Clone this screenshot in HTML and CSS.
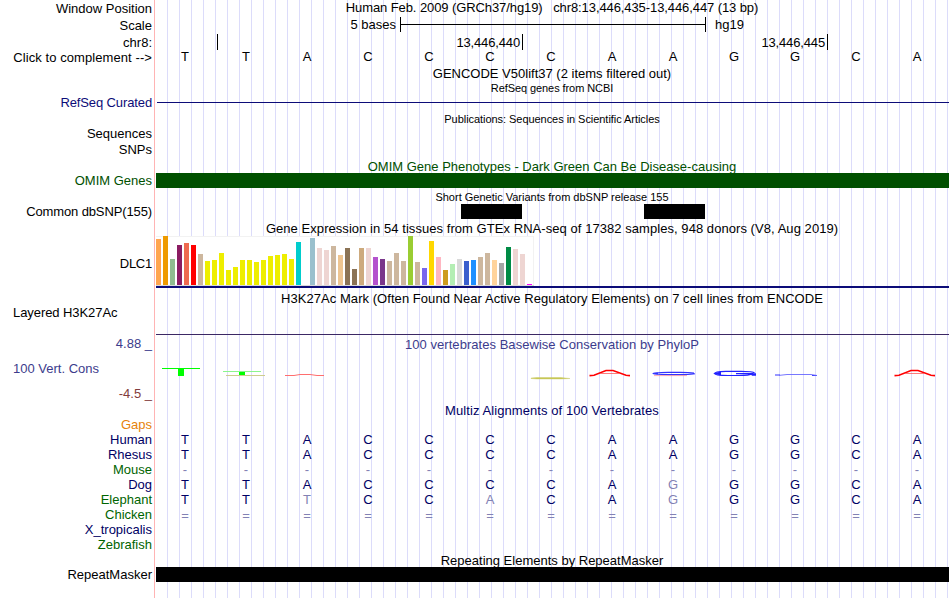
FILE: index.html
```html
<!DOCTYPE html>
<html lang="en">
<head>
<meta charset="utf-8">
<title>chr8:13,446,435-13,446,447</title>
<link rel="stylesheet" href="styles.css">
</head>
<body>
<main class="browser">
  <section class="row position"><div class="label">Window Position</div><div class="plot"><h2 class="title">Human Feb. 2009 (GRCh37/hg19) &nbsp; chr8:13,446,435-13,446,447 (13 bp)</h2></div></section>
  <section class="row scale"><div class="label">Scale</div><div class="plot"><span class="scale-size">5 bases</span><span class="scale-bar"></span><span class="assembly">hg19</span></div></section>
  <section class="row ruler"><div class="label">chr8:</div><div class="plot"><span class="tick tick-first"></span><span class="tick">13,446,440</span><span class="tick">13,446,445</span></div></section>
  <section class="row bases"><div class="label">Click to complement --&gt;</div><div class="plot letters"><i>T</i><i>T</i><i>A</i><i>C</i><i>C</i><i>C</i><i>C</i><i>A</i><i>A</i><i>G</i><i>G</i><i>C</i><i>A</i></div></section>
  <section class="row gencode"><div class="label"></div><div class="plot"><h2 class="title">GENCODE V50lift37 (2 items filtered out)</h2></div></section>
  <section class="row refseq"><div class="label">RefSeq Curated</div><div class="plot"><h2 class="title small">RefSeq genes from NCBI</h2><div class="intron"></div></div></section>
  <section class="row pubs"><div class="label"></div><div class="plot"><h2 class="title small">Publications: Sequences in Scientific Articles</h2></div></section>
  <section class="row sub"><div class="label">Sequences</div></section>
  <section class="row sub"><div class="label">SNPs</div></section>
  <section class="row omim"><div class="label">OMIM Genes</div><div class="plot"><h2 class="title">OMIM Gene Phenotypes - Dark Green Can Be Disease-causing</h2><div class="bar"></div></div></section>
  <section class="row dbsnp"><div class="label">Common dbSNP(155)</div><div class="plot"><h2 class="title small">Short Genetic Variants from dbSNP release 155</h2><div class="variants"><b></b><b></b></div></div></section>
  <section class="row gtex"><div class="label">DLC1</div><div class="plot"><h2 class="title">Gene Expression in 54 tissues from GTEx RNA-seq of 17382 samples, 948 donors (V8, Aug 2019)</h2>
    <svg class="expression" width="378" height="50" shape-rendering="crispEdges">
      <rect width="378" height="50" fill="#fff"/>
      <path d="M0 .5H377.5V49" fill="none" stroke="#f2f2f2"/>
      <path d="M0 49.5H378" stroke="#d9d9d9"/>
      <g transform="matrix(1 0 0 -1 0 49)">
        <rect x="0" width="5" height="46" fill="#ffa54f"/><rect x="7" width="5" height="49" fill="#ee9a00"/><rect x="14" width="5" height="26" fill="#8fbc8f"/><rect x="21" width="5" height="40" fill="#8b1c62"/><rect x="28" width="5" height="42" fill="#ee6a50"/><rect x="35" width="5" height="40" fill="#f00"/><rect x="42" width="5" height="31" fill="#cdb79e"/>
        <g fill="#ee0"><rect x="49" width="5" height="24"/><rect x="56" width="5" height="25"/><rect x="63" width="5" height="32"/><rect x="70" width="5" height="15"/><rect x="77" width="5" height="18"/><rect x="84" width="5" height="25"/><rect x="91" width="5" height="25"/><rect x="98" width="5" height="23"/><rect x="105" width="5" height="25"/><rect x="112" width="5" height="29"/><rect x="119" width="5" height="30"/><rect x="126" width="5" height="31"/><rect x="133" width="5" height="26"/></g>
        <rect x="140" width="5" height="43" fill="#00cdcd"/><rect x="154" width="5" height="47" fill="#9ac0cd"/><rect x="161" width="5" height="37" fill="#eed5d2"/><rect x="168" width="5" height="35" fill="#eed5d2"/><rect x="175" width="5" height="39" fill="#cdb79e"/><rect x="182" width="5" height="30" fill="#eec591"/><rect x="189" width="5" height="37" fill="#8b7355"/><rect x="196" width="5" height="16" fill="#8b7355"/><rect x="203" width="5" height="37" fill="#cdaa7d"/><rect x="210" width="5" height="37" fill="#eed5d2"/><rect x="217" width="5" height="28" fill="#b452cd"/><rect x="224" width="5" height="26" fill="#7a378b"/>
        <rect x="231" width="5" height="24" fill="#cdb79e"/><rect x="238" width="5" height="32" fill="#cdb79e"/><rect x="245" width="5" height="24" fill="#cdb79e"/><rect x="252" width="5" height="49" fill="#9acd32"/><rect x="259" width="5" height="23" fill="#cdb79e"/><rect x="266" width="5" height="17" fill="#7a67ee"/><rect x="273" width="5" height="44" fill="#ffd700"/><rect x="280" width="5" height="28" fill="#ffb6c1"/><rect x="287" width="5" height="15" fill="#cd9b1d"/><rect x="294" width="5" height="21" fill="#b4eeb4"/><rect x="301" width="5" height="26" fill="#d9d9d9"/><rect x="308" width="5" height="24" fill="#3a5fcd"/><rect x="315" width="5" height="25" fill="#1e90ff"/>
        <rect x="322" width="5" height="28" fill="#cdb79e"/><rect x="329" width="5" height="32" fill="#cdb79e"/><rect x="336" width="5" height="25" fill="#ffd39b"/><rect x="343" width="5" height="22" fill="#a6a6a6"/><rect x="350" width="5" height="38" fill="#008b45"/><rect x="357" width="5" height="36" fill="#eed5d2"/><rect x="364" width="5" height="31" fill="#eed5d2"/><rect x="371" width="5" height="1" fill="#f0f"/>
      </g>
    </svg><div class="gene-line"></div></div></section>
  <section class="row h3k"><div class="label left">Layered H3K27Ac</div><div class="plot"><h2 class="title">H3K27Ac Mark (Often Found Near Active Regulatory Elements) on 7 cell lines from ENCODE</h2><div class="baseline"></div></div></section>
  <section class="row cons"><div class="label"><div>4.88 _</div><div class="left">100 Vert. Cons</div><div class="low">-4.5 _</div></div><div class="plot"><h2 class="title">100 vertebrates Basewise Conservation by PhyloP</h2>
    <svg class="logo" width="793" height="30" viewBox="156 352 793 30">
      <g shape-rendering="crispEdges"><path d="M162 368h38v1h-38zM178 368h6v8h-6zM239 371h6v4h-6z" fill="#0f0"/><path d="M223 371h38v1h-38z" fill="#8cf58c"/><path d="M226 375h39v1h-39z" fill="#cdcd8c"/></g>
      <path d="M285 375.5h9l6-1h10l7 1h7" fill="none" stroke="#ff6e6e"/>
      <path d="M531 378l6-.5h24l9 1-9 .5h-24l-6-.5z" fill="#c8c850" stroke="#c8c864" stroke-width=".4"/>
      <g id="adenine"><path d="M589.5 375.6L594 375.2L606 370.5H613L626 375.2L630 375.6" fill="none" stroke="red" stroke-width="1.6"/><path d="M600 373.5h19" stroke="#ff5a5a" stroke-width=".8"/></g>
      <use href="#adenine" x="305"/>
      <path d="M694 373.1Q689 372.4 680 372.4H668Q653 372.7 653 373.6Q653 374.5 668 374.6H684Q692 374.6 695 373.8" fill="none" stroke="#33f" stroke-width="1.1"/><path d="M652 373.6l6-1v2z" fill="#33f"/><path d="M654 375.6h33" stroke="#f99" stroke-width=".8"/>
      <path d="M754.5 373Q753 371.4 741 371.4H726Q714.5 371.7 714.5 373.5Q714.5 375.4 728 375.5H739Q749 375.5 753 373.6H736" fill="none" stroke="#22f" stroke-width="1.2"/>
      <path d="M713 373.5l8-2v4zM750 373.2h6v2.5h-4z" fill="#22f"/>
      <path d="M775 374.5h5v1h-5zM812 375h5v1h-5z" fill="#33f"/><path d="M779 375.4l8-.9h24l6 1" fill="none" stroke="#6969ff" stroke-width=".9"/>
    </svg></div></section>
  <section class="row multiz"><div class="label"></div><div class="plot"><h2 class="title">Multiz Alignments of 100 Vertebrates</h2></div></section>
  <section class="row species"><div class="label gaps">Gaps</div></section>
  <section class="row species"><div class="label">Human</div><div class="plot letters"><i>T</i><i>T</i><i>A</i><i>C</i><i>C</i><i>C</i><i>C</i><i>A</i><i>A</i><i>G</i><i>G</i><i>C</i><i>A</i></div></section>
  <section class="row species"><div class="label">Rhesus</div><div class="plot letters"><i>T</i><i>T</i><i>A</i><i>C</i><i>C</i><i>C</i><i>C</i><i>A</i><i>A</i><i>G</i><i>G</i><i>C</i><i>A</i></div></section>
  <section class="row species"><div class="label alt">Mouse</div><div class="plot letters faint"><i>-</i><i>-</i><i>-</i><i>-</i><i>-</i><i>-</i><i>-</i><i>-</i><i>-</i><i>-</i><i>-</i><i>-</i><i>-</i></div></section>
  <section class="row species"><div class="label">Dog</div><div class="plot letters"><i>T</i><i>T</i><i>A</i><i>C</i><i>C</i><i>C</i><i>C</i><i>A</i><i class="faint">G</i><i>G</i><i>G</i><i>C</i><i>A</i></div></section>
  <section class="row species"><div class="label alt">Elephant</div><div class="plot letters"><i>T</i><i>T</i><i class="faint">T</i><i>C</i><i>C</i><i class="faint">A</i><i>C</i><i>A</i><i class="faint">G</i><i>G</i><i>G</i><i>C</i><i>A</i></div></section>
  <section class="row species"><div class="label alt">Chicken</div><div class="plot letters faint unaligned"><i>=</i><i>=</i><i>=</i><i>=</i><i>=</i><i>=</i><i>=</i><i>=</i><i>=</i><i>=</i><i>=</i><i>=</i><i>=</i></div></section>
  <section class="row species"><div class="label">X_tropicalis</div></section>
  <section class="row species"><div class="label alt">Zebrafish</div></section>
  <section class="row repeats"><div class="label">RepeatMasker</div><div class="plot"><h2 class="title">Repeating Elements by RepeatMasker</h2><div class="bar"></div></div></section>
</main>
</body>
</html>
```
FILE: styles.css
```css
* { box-sizing: border-box; }
body { margin: 0; background: #fff; }
.browser {
  width: 949px;
  height: 598px;
  overflow: hidden;
  font: 13px/15px "Liberation Sans", Arial, sans-serif;
  color: #000;
  background:
    linear-gradient(#ffb4b4, #ffb4b4) 154px 0 / 1px 100% no-repeat,
    repeating-linear-gradient(90deg, #dcdcfa 0 1px, transparent 1px 12px) 167px 0 / 782px 100% no-repeat;
}
.row {
  display: grid;
  grid-template-columns: 152px 793px;
  column-gap: 4px;
  white-space: nowrap;
}
.label { text-align: right; }
.left { text-align: left; padding-left: 13px; }
.title { margin: 0 1px 0 0; font-size: 13px; font-weight: 400; text-align: center; height: 15px; }
.small { font-size: 11px; line-height: 12px; height: 12px; }
.letters { display: grid; grid-template-columns: repeat(13, 61px); margin-left: -1.5px; text-align: center; }
.letters i { font-style: normal; }

.position { height: 17px; }
.position .title { letter-spacing: -.09px; }
.position .label, .scale .label, .ruler .label, .bases .label { padding-top: 1px; }
.scale { height: 17px; }
.scale .plot { display: flex; }
.scale-size { width: 240px; text-align: right; }
.scale-bar {
  width: 306px;
  height: 15px;
  margin-left: 4px;
  border: solid #000;
  border-width: 0 1px;
  background: linear-gradient(#000, #000) 0 7px / 100% 1px no-repeat;
}
.assembly { margin-left: 9px; }
.ruler { height: 15px; }
.ruler .plot { display: flex; }
.tick { width: 305px; padding: 1px 2px 0 0; border-right: 1px solid #000; text-align: right; letter-spacing: -.15px; }
.tick-first { width: 62px; }
.bases { height: 16px; }
.bases .label { letter-spacing: .08px; }
.gencode { height: 15px; padding-top: 1px; }
.refseq { height: 31px; }
.refseq .label { padding-top: 15px; color: #0c0c78; letter-spacing: -.12px; }
.refseq .title { letter-spacing: -.08px; }
.refseq .plot, .pubs .plot, .dbsnp .plot, .gtex .plot, .h3k .plot, .cons .plot { padding-top: 2px; }
.intron { height: 1px; margin: 8px 0 0 1px; background: #0c0c78; }
.pubs { height: 15px; letter-spacing: -.05px; }
.sub { height: 16px; }
.omim { height: 31px; color: #005000; }
.omim .label, .dbsnp .label, .repeats .label { padding-top: 15px; }
.omim .plot, .repeats .plot { padding-top: 1px; }
.omim .title, .repeats .title { height: 14px; }
.bar { position: relative; height: 15px; background: #000; }
.omim .bar { background: #005000; }
.dbsnp { height: 30px; }
.dbsnp .label { letter-spacing: -.12px; }
.variants { display: flex; gap: 122px; margin: 1px 0 0 305px; }
.variants b { width: 61px; height: 15px; background: #000; }
.gtex { height: 70px; }
.gtex .label { padding-top: 37px; letter-spacing: -.25px; }
.gtex .title { letter-spacing: .055px; }
.expression, .logo { display: block; }
.gene-line { height: 2px; background: #0c0c78; }
.h3k { height: 46px; }
.h3k .label { padding-top: 16px; letter-spacing: -.07px; }
.h3k .title { letter-spacing: .05px; }
.baseline { height: 1px; margin-top: 28px; background: #3c2864; }
.cons { height: 65px; color: #3c3c8c; }
.cons .title { letter-spacing: .04px; }
.cons .label { display: grid; row-gap: 10px; align-content: start; padding-top: 1px; }
.low { color: #823c3c; }
.multiz { height: 17px; padding-top: 3px; color: #000064; letter-spacing: .08px; }
.species { height: 15px; color: #000064; }
.gaps { color: #e6820a; }
.alt { color: #006400; }
.faint { color: #8282b4; }
.unaligned { padding-top: 1px; }
.repeats { height: 46px; }
```
